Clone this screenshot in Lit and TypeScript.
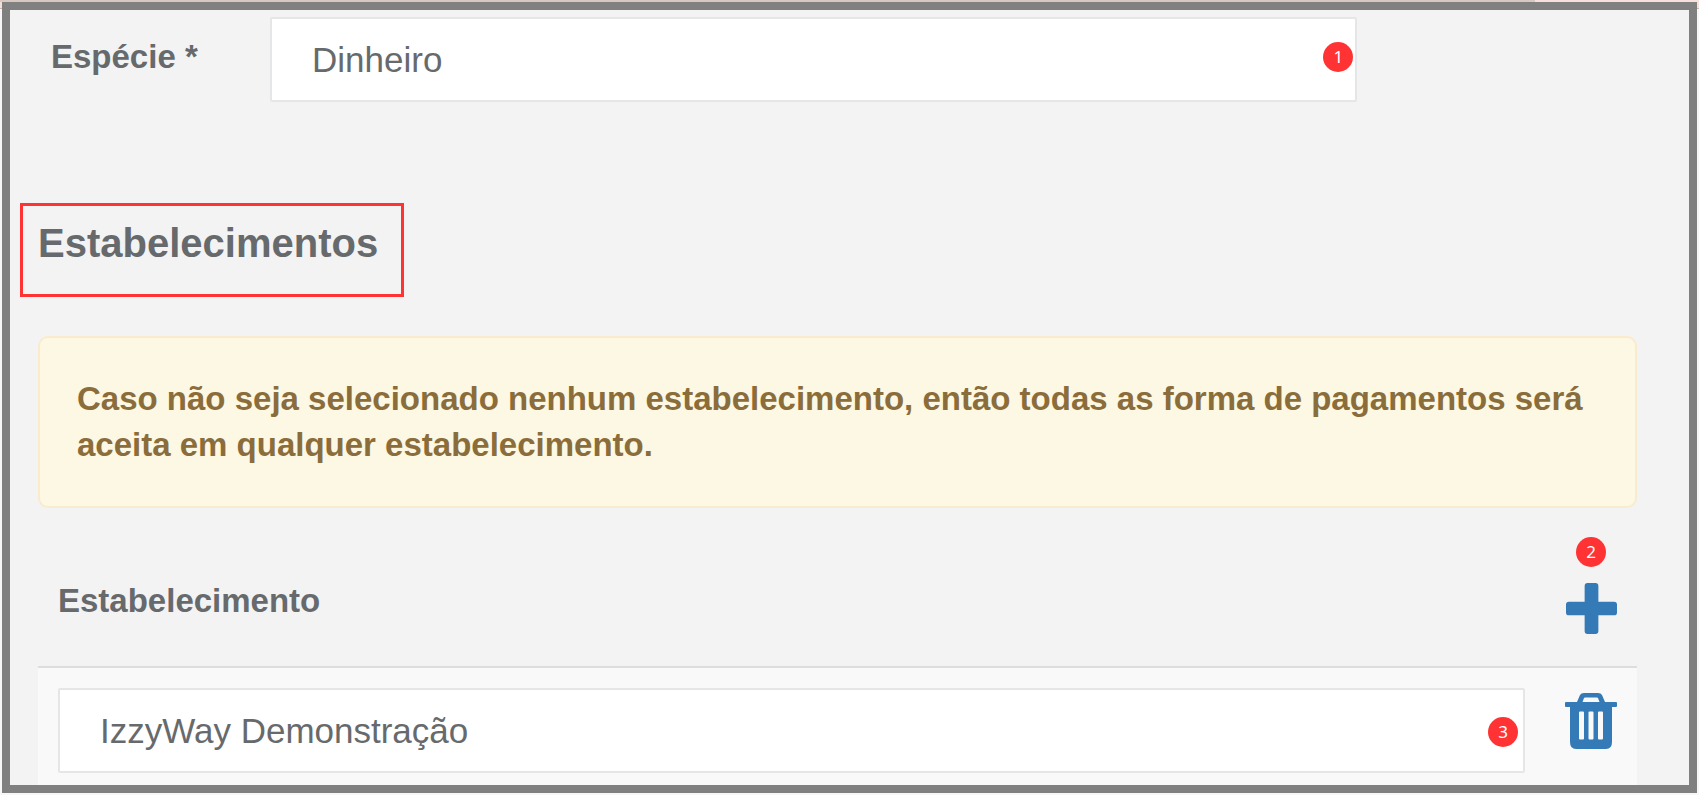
import { LitElement, html, css, svg } from "lit";
import { customElement, state } from "lit/decorators.js";

const plusIcon = svg`
  <svg class="icon" viewBox="0 0 52 52" width="51" height="51" aria-hidden="true">
    <path d="M22 0h8q3 0 3 3v16h16q3 0 3 3v8q0 3-3 3H33v16q0 3-3 3h-8q-3 0-3-3V33H3q-3 0-3-3v-8q0-3 3-3h16V3q0-3 3-3z"/>
  </svg>`;

const trashIcon = svg`
  <svg class="icon" viewBox="0 0 52 56" width="52" height="56" aria-hidden="true">
    <path fill-rule="evenodd" d="M19 0h14q3 0 4 2l3 7h11q1 0 1 1v3q0 1-1 1h-4v35q0 7-6 7H11q-6 0-6-7V14H1q-1 0-1-1v-3q0-1 1-1h11l3-7q1-2 4-2zM20 4.500q-.7 0-1 .6L17.500 9h17L33 5.100q-.3-.6-1-.6zM15 18.500q-1 0-1 1v26q0 1 1 1h3q1 0 1-1v-26q0-1-1-1zM24.500 18.500q-1 0-1 1v26q0 1 1 1h3q1 0 1-1v-26q0-1-1-1zM34 18.500q-1 0-1 1v26q0 1 1 1h3q1 0 1-1v-26q0-1-1-1z"/>
  </svg>`;

@customElement("app-root")
export class AppRoot extends LitElement {
  @state() private rows: string[] = ["IzzyWay Demonstração"];

  static styles = css`
    :host {
      display: block;
      box-sizing: border-box;
      min-height: 100vh;
      padding: 2px;
      font-family: "Liberation Sans", Arial, sans-serif;
      color: #676a6c;
      background:
        linear-gradient(90deg, #d9c8c1 0 1535px, #f9e0da 1535px) 0 0 / 100% 2px no-repeat,
        linear-gradient(#f6dfd9 0 8px, #c4b6b3 8px) 0 0 / 100% 9px no-repeat,
        #f7f7f8;
    }
    * { box-sizing: border-box; }
    .frame {
      min-height: calc(100vh - 4px);
      border: 8px solid #808080;
      background: #f3f3f4;
      padding: 7px 52px 0 28px;
    }
    .field-row {
      display: grid;
      grid-template-columns: 232px minmax(0, 68%);
    }
    .label {
      padding: 21px 0 0 13px;
      font-size: 33px;
      line-height: 38px;
      font-weight: bold;
    }
    .control { position: relative; }
    .select {
      display: block;
      width: 100%;
      height: 85px;
      margin: 0;
      padding: 0 40px;
      border: 2px solid #e5e6e7;
      border-radius: 2px;
      background: #fff;
      color: inherit;
      font: 35px "Liberation Sans", Arial, sans-serif;
      appearance: none;
    }
    .badge {
      display: flex;
      align-items: center;
      justify-content: center;
      width: 30px;
      height: 30px;
      border-radius: 50%;
      background: #ff3333;
      color: #fff;
      font: 17px/30px "Noto Sans", sans-serif;
    }
    .control .badge {
      position: absolute;
      right: 4px;
      top: 25px;
    }
    .table .control .badge {
      right: 7px;
      top: 29px;
    }
    .title {
      width: fit-content;
      margin: 101px 0 39px -18px;
      padding: 14px 23px 28px 15px;
      border: 3px solid #ff3333;
      font-size: 40px;
      line-height: 46px;
      font-weight: bold;
    }
    .alert {
      margin: 0;
      padding: 38px 37px;
      border: 2px solid #faebcc;
      border-radius: 10px;
      background: #fcf8e3;
      color: #8a6d3b;
      font-size: 33px;
      line-height: 46px;
      font-weight: bold;
    }
    .table {
      width: 100%;
      border-collapse: collapse;
      table-layout: fixed;
      text-align: left;
    }
    .table th {
      padding: 29px 20px 32px;
      border-bottom: 2px solid #dddddd;
      vertical-align: bottom;
      font-size: 33px;
      line-height: 38px;
    }
    .table .name { padding-bottom: 46px; }
    .table .tools { width: 92px; }
    .table td {
      padding: 20px 20px 12px;
      background: #f9f9f9;
      vertical-align: top;
    }
    .table td:last-child { padding-top: 25px; }
    .add {
      display: flex;
      flex-direction: column;
      align-items: center;
      gap: 16px;
    }
    .button {
      display: block;
      padding: 0;
      border: 0;
      background: none;
      color: #337ab7;
      cursor: pointer;
    }
    .icon { display: block; fill: currentColor; }
  `;

  private addRow() {
    this.rows = [...this.rows, "IzzyWay Demonstração"];
  }

  private removeRow(index: number) {
    this.rows = this.rows.filter((_, i) => i !== index);
  }

  render() {
    return html`
      <main class="frame">
        <div class="field-row">
          <label class="label" for="especie">Espécie *</label>
          <div class="control">
            <select class="select" id="especie"><option>Dinheiro</option></select>
            <span class="badge">1</span>
          </div>
        </div>
        <h2 class="title">Estabelecimentos</h2>
        <p class="alert">Caso não seja selecionado nenhum estabelecimento, então todas as forma de pagamentos será aceita em qualquer estabelecimento.</p>
        <table class="table">
          <thead>
            <tr>
              <th class="name" id="col-name" scope="col">Estabelecimento</th>
              <th class="tools" scope="col">
                <div class="add">
                  <span class="badge">2</span>
                  <button class="button" type="button" aria-label="Adicionar" @click=${this.addRow}>${plusIcon}</button>
                </div>
              </th>
            </tr>
          </thead>
          <tbody>
            ${this.rows.map((name, i) => html`
              <tr>
                <td>
                  <div class="control">
                    <select class="select" aria-labelledby="col-name"><option>${name}</option></select>
                    ${i === 0 ? html`<span class="badge">3</span>` : null}
                  </div>
                </td>
                <td>
                  <button class="button" type="button" aria-label="Remover" @click=${() => this.removeRow(i)}>${trashIcon}</button>
                </td>
              </tr>`)}
          </tbody>
        </table>
      </main>
    `;
  }
}
